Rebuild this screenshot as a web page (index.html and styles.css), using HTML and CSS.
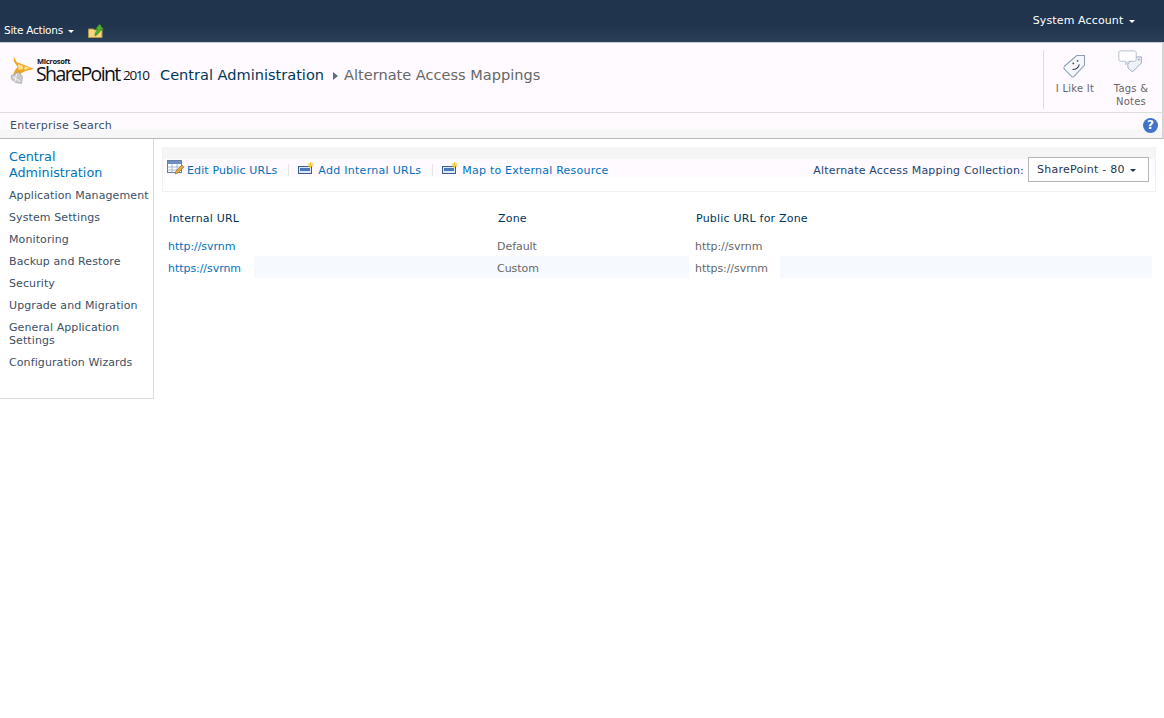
FILE: index.html
```html
<!DOCTYPE html>
<html lang="en">
<head>
    <meta charset="UTF-8">
    <title>Alternate Access Mappings</title>
    <link rel="stylesheet" href="styles.css">
</head>
<body>
    <div class="top-bar">
        <div class="top-left">
            <span class="site-actions">Site Actions <i class="caret caret-white"></i></span>
            <svg class="folder-icon" width="17" height="15" viewBox="0 0 17 15">
                <path d="M.5 6h5l1 1h7.500v7.500H.5z" fill="#f4d67c" stroke="#b3954a"/>
                <path d="M7 13c0-3 1-5 3-6.500H7.500L11.500 1l4 5.500H13c-1 2-3 5-6 6.500z" fill="#4fae2e" stroke="#2f7d1c" stroke-width=".6"/>
            </svg>
        </div>
        <div class="account">System Account <i class="caret caret-white"></i></div>
    </div>

    <div class="title-row">
        <div class="logo">
            <svg class="logo-mark" width="27" height="30" viewBox="0 0 28 30">
                <path d="M5 1l3 6 6 2 12 5-9 2-7 4-6 3c0-4 2-8 5-11L5 6z" fill="#f2a51f"/>
                <path d="M9 9l5 1 1 4-5 1zM16 11l6 2-6 2z" fill="#fbe28a"/>
                <path d="M2 21l8-4 4 5-1 7-6-1-4-3z" fill="#c9c9c9" stroke="#8d8d8d" stroke-width=".5"/>
                <path d="M4 22l8 5M8 19l-2 8" stroke="#fff" stroke-width=".8"/>
            </svg>
            <div class="logo-text">
                <span class="logo-ms">Microsoft</span>
                <span class="logo-sp">SharePoint</span>
            </div>
            <span class="logo-year">2010</span>
        </div>
        <div class="breadcrumb">
            <span class="crumb-root">Central Administration</span>
            <i class="crumb-arrow"></i>
            <span class="crumb-page">Alternate Access Mappings</span>
        </div>
        <div class="social">
            <div class="social-item like">
                <svg width="26" height="26" viewBox="0 0 30 30">
                    <path d="M3 15L17 3h9v11L14 27c-1 1-2 1-3 0l-8-8c-1-1-1-3 0-4z" fill="#f4f6f9" stroke="#8ba0b8" stroke-width="1.200"/>
                    <circle cx="13" cy="12" r="1" fill="#445"/>
                    <circle cx="18" cy="9" r="1" fill="#445"/>
                    <path d="M12 19c4 0 7-2 8-6" fill="none" stroke="#445" stroke-width="1.200"/>
                </svg>
                <span>I Like It</span>
            </div>
            <div class="social-item tags">
                <svg width="26" height="26" viewBox="0 0 30 30">
                    <path d="M12 15l9-7h6v7l-9 9c-1 1-2 1-3 0l-3-3c-1-2-1-4 0-6z" fill="#eef1f5" stroke="#8ba0b8"/>
                    <circle cx="24" cy="11" r="1" fill="#8ba0b8"/>
                    <path d="M2 1h17c1 0 2 1 2 2v8c0 1-1 2-2 2h-7l-3 4v-4H3c-1 0-2-1-2-2V2z" fill="#fff" stroke="#a8b6c6"/>
                </svg>
                <span>Tags &amp;<br>Notes</span>
            </div>
        </div>
    </div>

    <div class="nav-row">
        <span class="nav-label">Enterprise Search</span>
        <span class="help-icon">?</span>
    </div>

    <div class="page-body">
        <div class="side-nav">
            <a class="side-head">Central Administration</a>
            <a>Application Management</a>
            <a>System Settings</a>
            <a>Monitoring</a>
            <a>Backup and Restore</a>
            <a>Security</a>
            <a>Upgrade and Migration</a>
            <a>General Application Settings</a>
            <a>Configuration Wizards</a>
        </div>

        <div class="content">
            <div class="toolbar">
                <div class="toolbar-top"></div>
                <div class="toolbar-main">
                    <a class="tool tool-edit">
                        <svg width="17" height="16" viewBox="0 0 17 16">
                            <rect x=".5" y=".5" width="14" height="12" fill="#fff" stroke="#6a7f9c"/>
                            <rect x="1" y="1" width="13" height="3" fill="#6f8fc4"/>
                            <path d="M1 7h13M1 10h13M5 4v8M10 4v8" stroke="#a9b9d0"/>
                            <path d="M8 14l1-3 6-6 2 2-6 6z" fill="#e7a53a" stroke="#8a5a1a" stroke-width=".5"/>
                        </svg>
                        Edit Public URLs
                    </a>
                    <span class="tool-sep"></span>
                    <a class="tool tool-new">
                        <svg class="new-icon" width="16" height="13" viewBox="0 0 16 13">
                            <rect x=".5" y="4.500" width="13" height="7" fill="#dfe8f5" stroke="#3a5f95"/>
                            <rect x="2" y="6" width="10" height="3" fill="#4a78bd"/>
                            <path d="M12.500 0v6M9.500 3h6M10.500 1l4 4M14.500 1l-4 4" stroke="#f5c82e"/>
                        </svg>
                        Add Internal URLs
                    </a>
                    <span class="tool-sep"></span>
                    <a class="tool tool-new tool-map">
                        <svg class="new-icon" width="16" height="13" viewBox="0 0 16 13">
                            <rect x=".5" y="4.500" width="13" height="7" fill="#dfe8f5" stroke="#3a5f95"/>
                            <rect x="2" y="6" width="10" height="3" fill="#4a78bd"/>
                            <path d="M12.500 0v6M9.500 3h6M10.500 1l4 4M14.500 1l-4 4" stroke="#f5c82e"/>
                        </svg>
                        Map to External Resource
                    </a>
                    <div class="collection">
                        <span class="collection-label">Alternate Access Mapping Collection:</span>
                        <span class="collection-select">SharePoint - 80 <i class="caret caret-dark"></i></span>
                    </div>
                </div>
            </div>

            <div class="url-table">
                <div class="url-row url-head">
                    <div class="col-internal">Internal URL</div>
                    <div class="col-zone">Zone</div>
                    <div class="col-public">Public URL for Zone</div>
                </div>
                <div class="url-row">
                    <div class="col-internal"><a>http://svrnm</a></div>
                    <div class="col-zone">Default</div>
                    <div class="col-public">http://svrnm</div>
                </div>
                <div class="url-row url-alt">
                    <div class="col-internal"><a>https://svrnm</a></div>
                    <div class="col-zone">Custom</div>
                    <div class="col-public"><span>https://svrnm</span></div>
                </div>
            </div>
        </div>
    </div>
</body>
</html>
```

FILE: styles.css
```css
* {
    box-sizing: border-box;
}
body {
    margin: 0;
    background: #fff;
    font-family: "DejaVu Sans", Verdana, sans-serif;
    font-size: 11px;
    color: #3b4f65;
}
a {
    color: #0072bc;
    text-decoration: none;
}
.caret {
    display: inline-block;
    width: 0;
    height: 0;
    margin-left: 2px;
    vertical-align: middle;
    border-left: 3px solid transparent;
    border-right: 3px solid transparent;
    border-top: 3px solid #fff;
}
.caret-dark {
    margin-left: 1px;
    border-top-color: #1f3550;
}

.top-bar {
    height: 42px;
    display: flex;
    justify-content: space-between;
    background: linear-gradient(#21344e 0, #21344e 26px, #2b4058 42px);
    color: #fff;
}
.top-left {
    display: flex;
    align-items: flex-end;
    padding: 0 0 3px 4px;
}
.site-actions {
    font-size: 10.500px;
    letter-spacing: -0.25px;
    line-height: 18px;
}
.folder-icon {
    margin: 0 0 1px 14px;
}
.account {
    padding: 14px 29px 0 0;
    line-height: 14px;
    letter-spacing: 0.12px;
}

.title-row {
    height: 71px;
    display: flex;
    align-items: flex-start;
    background: #fefaff;
    border-top: 1px solid #c6ccd3;
    border-right: 2px solid #d4d4d4;
    border-bottom: 1px solid #dedede;
}
.logo {
    display: flex;
    align-items: flex-end;
    width: 160px;
    height: 42px;
    padding-left: 9px;
    color: #111;
    font-family: "Open Sans", "Liberation Sans", sans-serif;
}
.logo-mark {
    flex: none;
}
.logo-text {
    display: flex;
    flex-direction: column;
    width: 87px;
}
.logo-ms {
    font-size: 7.500px;
    font-weight: 700;
    line-height: 7px;
    letter-spacing: -0.3px;
    margin-left: 1px;
}
.logo-sp {
    font-size: 19.500px;
    line-height: 17px;
    letter-spacing: -1.600px;
    margin-bottom: 3px;
}
.logo-year {
    font-size: 13.500px;
    letter-spacing: -1.300px;
    line-height: 15px;
    margin-bottom: 2px;
}
.breadcrumb {
    display: flex;
    align-items: center;
    height: 63px;
    font-size: 14.560px;
    flex: 1;
}
.crumb-root {
    color: #003759;
}
.crumb-arrow {
    width: 0;
    height: 0;
    margin: 3px 6px 0 9px;
    border-top: 4px solid transparent;
    border-bottom: 4px solid transparent;
    border-left: 5px solid #5f6d7d;
}
.crumb-page {
    color: #676767;
}
.social {
    display: flex;
    height: 59px;
    margin-top: 7px;
    padding-right: 6px;
    border-left: 1px solid #dcdcdc;
}
.social-item {
    display: flex;
    flex-direction: column;
    align-items: center;
    font-size: 10px;
    line-height: 13px;
    letter-spacing: 0.25px;
    text-align: center;
    color: #676767;
}
.social-item svg {
    display: block;
}
.like {
    width: 62px;
    padding-top: 3px;
}
.like svg {
    margin-bottom: 3px;
}
.tags {
    width: 50px;
}
.tags svg {
    margin-bottom: 6px;
}

.nav-row {
    height: 26px;
    display: flex;
    justify-content: space-between;
    align-items: flex-start;
    padding: 6px 4px 0 10px;
    background: linear-gradient(#fefafe 0, #fefafe 16px, #f6f6f6 17px);
    border-right: 2px solid #d4d4d4;
    border-bottom: 1px solid #b8b8b8;
    color: #3b4f65;
}
.nav-label {
    line-height: 14px;
    letter-spacing: 0.24px;
}
.help-icon {
    width: 15px;
    height: 15px;
    margin-top: -1px;
    border-radius: 50%;
    background: #3f74c9;
    color: #fff;
    font-size: 12px;
    font-weight: 700;
    line-height: 15px;
    text-align: center;
}

.page-body {
    display: flex;
    align-items: flex-start;
}
.side-nav {
    flex: none;
    width: 154px;
    height: 260px;
    padding: 10px 0 0 9px;
    border-right: 1px solid #dbdbdb;
    border-bottom: 1px solid #dbdbdb;
}
.side-nav a {
    display: block;
    padding-right: 2px;
    margin-bottom: 9px;
    line-height: 13px;
    letter-spacing: 0.1px;
    color: #3b4f65;
}
.side-nav .side-head {
    margin-bottom: 8px;
    font-size: 12.750px;
    line-height: 16px;
    letter-spacing: 0;
    color: #0072bc;
}

.content {
    flex: 1;
    min-width: 0;
    padding: 8px 8px 0 8px;
}
.toolbar {
    height: 45px;
    border: 1px solid #f1f1f1;
    border-top: 0;
}
.toolbar-top {
    height: 12px;
    background: #f5f5f5;
}
.toolbar-main {
    height: 18px;
    display: flex;
    align-items: center;
    padding: 0 6px 0 4px;
    background: #fefaff;
}
.tool {
    display: flex;
    align-items: center;
    gap: 3px;
    line-height: 14px;
    padding-top: 6px;
}
.tool-edit {
    letter-spacing: 0.12px;
}
.tool-new {
    gap: 4px;
    letter-spacing: 0.28px;
}
.tool-map {
    letter-spacing: 0.22px;
}
.tool svg {
    margin-top: -7px;
}
.tool .new-icon {
    margin-top: -5px;
}
.tool-sep {
    width: 1px;
    height: 12px;
    margin: 4px 9px 0 11px;
    background: #e6e6e6;
}
.collection {
    display: flex;
    align-items: center;
    margin-left: auto;
    gap: 4px;
    height: 25px;
    margin-top: 3px;
}
.collection-label {
    color: #23466e;
    padding-top: 1px;
    letter-spacing: 0.18px;
}
.collection-select {
    width: 121px;
    height: 25px;
    padding: 4px 0 0 8px;
    line-height: 16px;
    letter-spacing: 0.25px;
    background: #fff;
    border: 1px solid #b5b5b5;
    color: #1f3550;
}

.url-table {
    padding-top: 16px;
}
.url-row {
    display: flex;
    height: 22px;
    line-height: 26px;
    letter-spacing: -0.05px;
    color: #676767;
}
.url-head {
    height: 26px;
    line-height: 22px;
    color: #003759;
    letter-spacing: 0.2px;
}
.col-internal {
    width: 92px;
    flex: none;
    padding-left: 6px;
}
.col-zone {
    width: 435px;
    flex: none;
    padding-left: 243px;
}
.col-public {
    width: 463px;
    flex: none;
    padding-left: 6px;
}
.url-head .col-internal {
    padding-left: 7px;
    white-space: nowrap;
}
.url-head .col-zone {
    padding-left: 244px;
}
.url-head .col-public {
    padding-left: 7px;
}
.url-alt .col-zone {
    background: #f6fafe;
}
.url-alt .col-public {
    background: linear-gradient(90deg, #fff 91px, #f6fafe 91px);
}
```
